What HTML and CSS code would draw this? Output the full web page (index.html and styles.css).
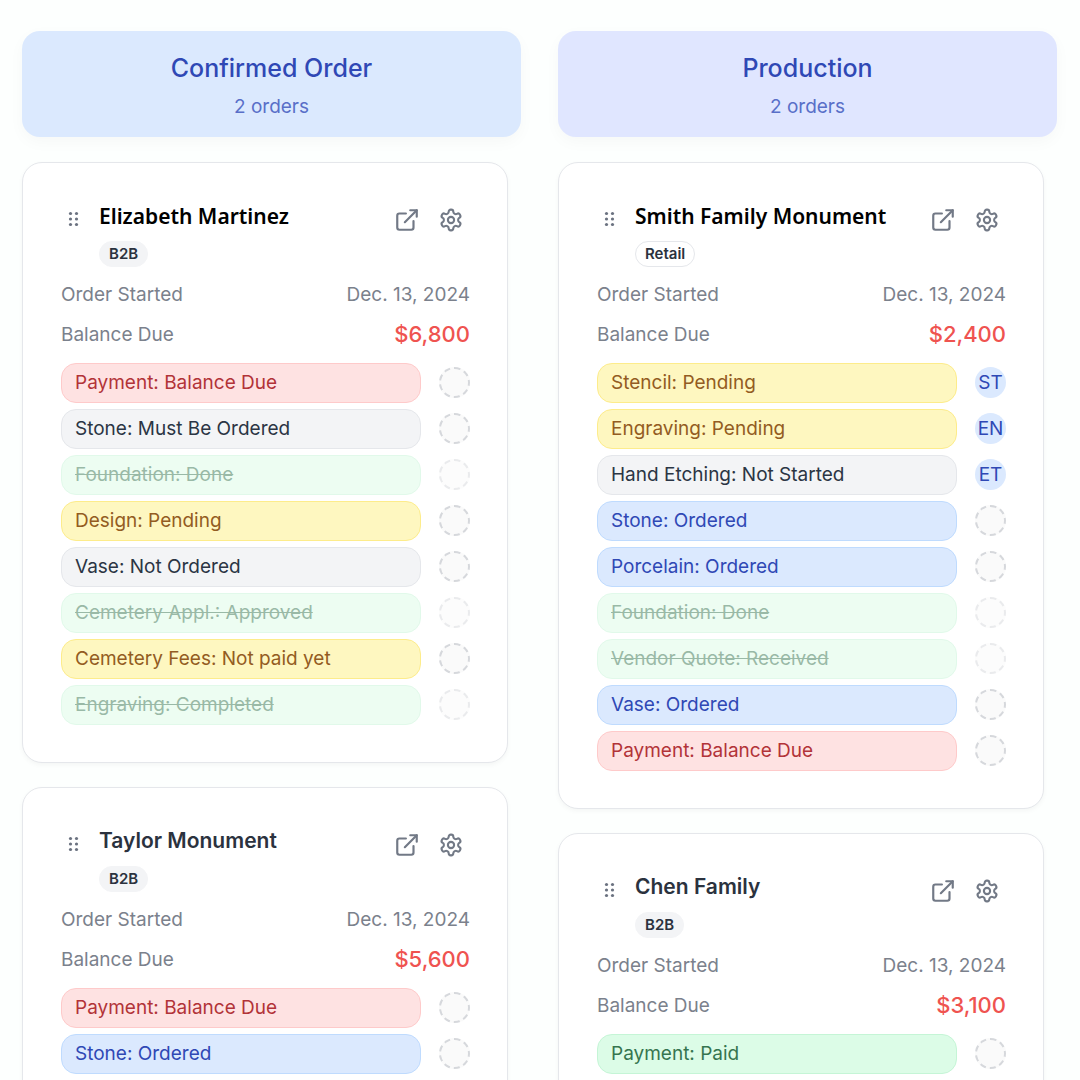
FILE: index.html
```html
<!DOCTYPE html>
<html lang="en">
<head>
    <meta charset="UTF-8">
    <meta name="viewport" content="width=device-width, initial-scale=1.0">
    <title>Orders</title>
    <link rel="stylesheet" href="styles.css">
</head>
<body>
    <svg class="sprite" aria-hidden="true">
        <symbol id="grip" viewBox="0 0 12 16">
            <circle cx="2.5" cy="2.5" r="1.6"/><circle cx="8.5" cy="2.5" r="1.6"/>
            <circle cx="2.5" cy="8" r="1.6"/><circle cx="8.5" cy="8" r="1.6"/>
            <circle cx="2.5" cy="13.5" r="1.6"/><circle cx="8.5" cy="13.5" r="1.6"/>
        </symbol>
        <symbol id="open" viewBox="0 0 24 24">
            <path d="M15 3h6v6"/>
            <path d="M10 14 21 3"/>
            <path d="M18 13v6a2 2 0 0 1-2 2H5a2 2 0 0 1-2-2V8a2 2 0 0 1 2-2h6"/>
        </symbol>
        <symbol id="gear" viewBox="-0.5 -0.5 25 25">
            <path d="M12.22 2h-.44a2 2 0 0 0-2 2v.18a2 2 0 0 1-1 1.73l-.43.25a2 2 0 0 1-2 0l-.15-.08a2 2 0 0 0-2.73.73l-.22.38a2 2 0 0 0 .73 2.73l.15.1a2 2 0 0 1 1 1.72v.51a2 2 0 0 1-1 1.74l-.15.09a2 2 0 0 0-.73 2.73l.22.38a2 2 0 0 0 2.73.73l.15-.08a2 2 0 0 1 2 0l.43.25a2 2 0 0 1 1 1.73V20a2 2 0 0 0 2 2h.44a2 2 0 0 0 2-2v-.18a2 2 0 0 1 1-1.73l.43-.25a2 2 0 0 1 2 0l.15.08a2 2 0 0 0 2.73-.73l.22-.39a2 2 0 0 0-.73-2.73l-.15-.08a2 2 0 0 1-1-1.74v-.5a2 2 0 0 1 1-1.74l.15-.09a2 2 0 0 0 .73-2.73l-.22-.38a2 2 0 0 0-2.73-.73l-.15.08a2 2 0 0 1-2 0l-.43-.25a2 2 0 0 1-1-1.73V4a2 2 0 0 0-2-2z"/>
            <circle cx="12" cy="12" r="3"/>
        </symbol>
    </svg>

    <main class="board">
        <section class="column">
            <header class="column-header confirmed">
                <h2>Confirmed Order</h2>
                <p>2 orders</p>
            </header>

            <article class="card">
                <div class="card-top">
                    <svg class="grip"><use href="#grip"/></svg>
                    <div class="card-title">
                        <h3 class="accent">Elizabeth Martinez</h3>
                        <span class="badge">B2B</span>
                    </div>
                    <div class="actions">
                        <button type="button" aria-label="Open order"><svg><use href="#open"/></svg></button>
                        <button type="button" aria-label="Order settings"><svg><use href="#gear"/></svg></button>
                    </div>
                </div>
                <dl class="details">
                    <div><dt>Order Started</dt><dd>Dec. 13, 2024</dd></div>
                    <div><dt>Balance Due</dt><dd class="amount">$6,800</dd></div>
                </dl>
                <ul class="tasks">
                    <li><span class="task red">Payment: Balance Due</span><button type="button" class="assign" aria-label="Assign"></button></li>
                    <li><span class="task gray">Stone: Must Be Ordered</span><button type="button" class="assign" aria-label="Assign"></button></li>
                    <li class="done"><span class="task green">Foundation: Done</span><button type="button" class="assign" aria-label="Assign"></button></li>
                    <li><span class="task yellow">Design: Pending</span><button type="button" class="assign" aria-label="Assign"></button></li>
                    <li><span class="task gray">Vase: Not Ordered</span><button type="button" class="assign" aria-label="Assign"></button></li>
                    <li class="done"><span class="task green">Cemetery Appl.: Approved</span><button type="button" class="assign" aria-label="Assign"></button></li>
                    <li><span class="task yellow">Cemetery Fees: Not paid yet</span><button type="button" class="assign" aria-label="Assign"></button></li>
                    <li class="done"><span class="task green">Engraving: Completed</span><button type="button" class="assign" aria-label="Assign"></button></li>
                </ul>
            </article>

            <article class="card">
                <div class="card-top">
                    <svg class="grip"><use href="#grip"/></svg>
                    <div class="card-title">
                        <h3>Taylor Monument</h3>
                        <span class="badge">B2B</span>
                    </div>
                    <div class="actions">
                        <button type="button" aria-label="Open order"><svg><use href="#open"/></svg></button>
                        <button type="button" aria-label="Order settings"><svg><use href="#gear"/></svg></button>
                    </div>
                </div>
                <dl class="details">
                    <div><dt>Order Started</dt><dd>Dec. 13, 2024</dd></div>
                    <div><dt>Balance Due</dt><dd class="amount">$5,600</dd></div>
                </dl>
                <ul class="tasks">
                    <li><span class="task red">Payment: Balance Due</span><button type="button" class="assign" aria-label="Assign"></button></li>
                    <li><span class="task blue">Stone: Ordered</span><button type="button" class="assign" aria-label="Assign"></button></li>
                </ul>
            </article>
        </section>

        <section class="column">
            <header class="column-header production">
                <h2>Production</h2>
                <p>2 orders</p>
            </header>

            <article class="card">
                <div class="card-top">
                    <svg class="grip"><use href="#grip"/></svg>
                    <div class="card-title">
                        <h3 class="accent">Smith Family Monument</h3>
                        <span class="badge outline">Retail</span>
                    </div>
                    <div class="actions">
                        <button type="button" aria-label="Open order"><svg><use href="#open"/></svg></button>
                        <button type="button" aria-label="Order settings"><svg><use href="#gear"/></svg></button>
                    </div>
                </div>
                <dl class="details">
                    <div><dt>Order Started</dt><dd>Dec. 13, 2024</dd></div>
                    <div><dt>Balance Due</dt><dd class="amount">$2,400</dd></div>
                </dl>
                <ul class="tasks">
                    <li><span class="task yellow">Stencil: Pending</span><button type="button" class="assign filled">ST</button></li>
                    <li><span class="task yellow">Engraving: Pending</span><button type="button" class="assign filled">EN</button></li>
                    <li><span class="task gray">Hand Etching: Not Started</span><button type="button" class="assign filled">ET</button></li>
                    <li><span class="task blue">Stone: Ordered</span><button type="button" class="assign" aria-label="Assign"></button></li>
                    <li><span class="task blue">Porcelain: Ordered</span><button type="button" class="assign" aria-label="Assign"></button></li>
                    <li class="done"><span class="task green">Foundation: Done</span><button type="button" class="assign" aria-label="Assign"></button></li>
                    <li class="done"><span class="task green">Vendor Quote: Received</span><button type="button" class="assign" aria-label="Assign"></button></li>
                    <li><span class="task blue">Vase: Ordered</span><button type="button" class="assign" aria-label="Assign"></button></li>
                    <li><span class="task red">Payment: Balance Due</span><button type="button" class="assign" aria-label="Assign"></button></li>
                </ul>
            </article>

            <article class="card">
                <div class="card-top">
                    <svg class="grip"><use href="#grip"/></svg>
                    <div class="card-title">
                        <h3>Chen Family</h3>
                        <span class="badge">B2B</span>
                    </div>
                    <div class="actions">
                        <button type="button" aria-label="Open order"><svg><use href="#open"/></svg></button>
                        <button type="button" aria-label="Order settings"><svg><use href="#gear"/></svg></button>
                    </div>
                </div>
                <dl class="details">
                    <div><dt>Order Started</dt><dd>Dec. 13, 2024</dd></div>
                    <div><dt>Balance Due</dt><dd class="amount">$3,100</dd></div>
                </dl>
                <ul class="tasks">
                    <li><span class="task green">Payment: Paid</span><button type="button" class="assign" aria-label="Assign"></button></li>
                </ul>
            </article>
        </section>
    </main>
</body>
</html>
```
FILE: styles.css
```css
* {
    box-sizing: border-box;
    margin: 0;
    padding: 0;
}

body {
    font-family: Inter, sans-serif;
    font-size: 19px;
    color: #2b323e;
    background-color: #fdfffe;
}

button {
    font: inherit;
    border: none;
    cursor: pointer;
}

.sprite {
    display: none;
}

.board {
    display: grid;
    grid-template-columns: 1fr 1fr;
    gap: 37px;
    height: 100vh;
    padding: 31px 23px 0 22px;
    overflow: hidden;
}

.column-header {
    padding: 20px 20px 18px;
    margin-bottom: 25px;
    border-radius: 18px;
    text-align: center;
    box-shadow: 0 5px 16px rgba(0, 0, 0, 0.03);
}

.column-header h2 {
    font-size: 25px;
    font-weight: 500;
    line-height: 34px;
    color: #2f48b5;
}

.column-header p {
    margin-top: 10px;
    line-height: 24px;
    color: #596fc8;
}

.confirmed {
    background-color: #dbe9fe;
}

.production {
    background-color: #e0e6ff;
}

.card {
    margin: 0 13px 24px 0;
    padding: 38px 37px 37px 38px;
    background-color: #fff;
    border: 1px solid #e5e7eb;
    border-radius: 20px;
    box-shadow: 0 2px 5px rgba(0, 0, 0, 0.04);
}

.card-top {
    display: flex;
    align-items: flex-start;
}

.grip {
    width: 12px;
    height: 16px;
    margin: 10px 19px 0 7px;
    fill: #6b7280;
}

.card-title {
    flex: 1;
}

.card-title h3 {
    font-size: 21px;
    font-weight: 600;
    line-height: 30px;
    white-space: nowrap;
}

.card-title .accent {
    font-family: "Noto Sans", sans-serif;
    color: #000;
}

.badge {
    display: block;
    width: fit-content;
    margin-top: 10px;
    padding: 0 9px;
    border: 1px solid #f3f4f6;
    border-radius: 13px;
    background-color: #f3f4f6;
    font-size: 15px;
    font-weight: 600;
    line-height: 24px;
}

.outline {
    background-color: #fff;
    border-color: #e5e7eb;
}

.actions {
    display: flex;
    gap: 6px;
}

.actions button {
    display: flex;
    align-items: center;
    justify-content: center;
    width: 38px;
    height: 38px;
    background: none;
}

.actions svg {
    width: 26px;
    height: 26px;
    fill: none;
    stroke: #727986;
    stroke-width: 2;
    stroke-linecap: round;
    stroke-linejoin: round;
}

.details {
    margin: 14px 0;
}

.details div {
    display: flex;
    justify-content: space-between;
    line-height: 28px;
    color: #7b818c;
}

.details div + div {
    margin-top: 12px;
}

.details .amount {
    font-size: 22px;
    font-weight: 500;
    line-height: 26px;
    color: #ef5350;
}

.tasks {
    display: flex;
    flex-direction: column;
    gap: 6px;
    list-style: none;
}

.tasks li {
    display: flex;
    align-items: flex-start;
    gap: 18px;
}

.task {
    flex: 1;
    height: 40px;
    padding: 0 13px;
    border: 1px solid;
    border-radius: 15px;
    line-height: 37px;
}

.red {
    background-color: #fee2e2;
    border-color: #fecaca;
    color: #b23338;
}

.gray {
    background-color: #f3f4f6;
    border-color: #e5e7eb;
    color: #2b3544;
}

.green {
    background-color: #dcfce7;
    border-color: #c5f5d6;
    color: #36754f;
}

.yellow {
    background-color: #fef7c0;
    border-color: #fdec8b;
    color: #935c22;
}

.blue {
    background-color: #dbe9fe;
    border-color: #bfdbfe;
    color: #2f48b5;
}

.assign {
    width: 31px;
    height: 31px;
    margin-top: 4px;
    border: 2px dashed #d6d8dc;
    border-radius: 50%;
    background-color: #fafafa;
}

.filled {
    display: flex;
    align-items: center;
    justify-content: center;
    border: none;
    background-color: #dbe9fe;
    color: #2f48b5;
}

.done {
    opacity: 0.5;
}

.done .task {
    text-decoration: line-through;
}
```
